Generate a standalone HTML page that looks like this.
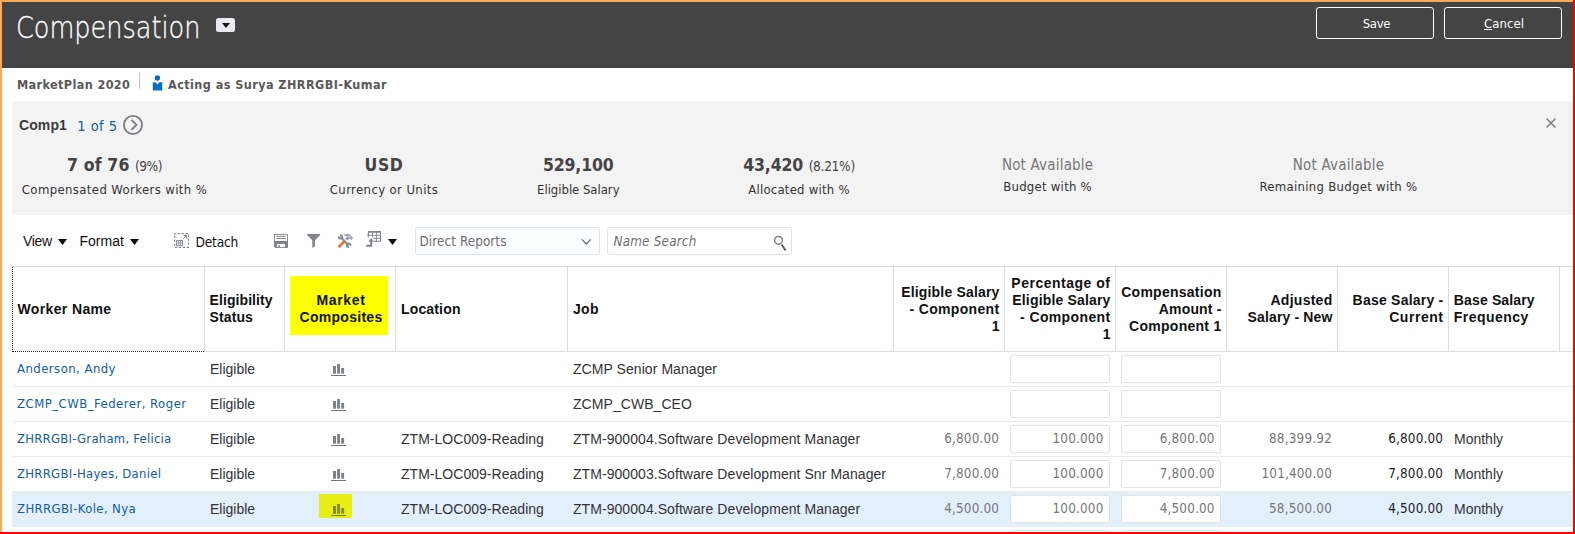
<!DOCTYPE html>
<html><head><meta charset="utf-8"><title>Compensation</title>
<style>
*{box-sizing:border-box;margin:0;padding:0}
html,body{width:1575px;height:534px;overflow:hidden;background:#fff}
body{position:relative;font-family:"Liberation Sans",sans-serif;font-size:14px;color:#333}
.a{position:absolute;white-space:nowrap}
.s{font-family:"DejaVu Sans Condensed","Liberation Sans",sans-serif}
#bt{left:0;top:0;width:1575px;height:2px;background:#fba95b}
#bl{left:0;top:0;width:2px;height:532px;background:#fba95b}
#br{left:1573px;top:0;width:2px;height:534px;background:#fe0000}
#bb{left:0;top:532px;width:1575px;height:2px;background:#fe0000}
#hdr{left:2px;top:2px;width:1571px;height:66px;background:#444444}
#title{left:15.5px;top:10px;font-size:29.5px;line-height:36px;color:#fff;font-family:"DejaVu Sans Light","DejaVu Sans","Liberation Sans",sans-serif;font-weight:normal;transform:scaleX(0.866);-webkit-text-stroke:0.3px #fff;transform-origin:0 0}
#dd{left:216px;top:18px;width:19px;height:14px;background:#e9ebf0;border-radius:2.5px}
#dd:after{content:"";position:absolute;left:5.5px;top:5px;border:4px solid transparent;border-top:5px solid #111;border-bottom:0}
.btn{top:7px;width:118px;height:32px;border:1px solid #fff;border-radius:3px;color:#fff;font-size:13px;line-height:32px;text-align:center;letter-spacing:0.1px}
.sub{font-size:12.5px;line-height:16px;font-weight:bold;color:#595959}
#sep{left:139px;top:73px;width:1px;height:16px;background:#c4c0a8}
#panel{left:12px;top:101px;width:1561px;height:114px;background:#f3f3f3}
.big{font-size:17.5px;font-weight:bold;color:#444;line-height:22px}
.pct{font-size:13.6px;font-weight:normal;color:#444}
.lbl{font-size:13px;color:#333;line-height:18px}
.na{font-size:15px;color:#777;line-height:18px}
.ctr{text-align:center;transform:translateX(-50%)}
.tb{font-size:14px;line-height:16px;color:#111}
.tri{top:239px}
.inp{top:227px;height:28px;width:185px;border:1px solid #dce3ea;border-radius:2.5px;background:#fcfdfe;font-size:13.3px;line-height:28px;color:#6e6e6e}
.vl{top:266px;width:1px;height:85px;background:#d6dfe6}
.th{font-weight:bold;font-size:14px;line-height:17px;color:#111}
.th span{display:block}
.row{left:12px;width:1561px;height:35px}
.hl{left:12px;width:1561px;height:1px;background:#ebebeb}
.c{font-size:14px;line-height:16px;color:#333}
.lnk{color:#125ca2;font-size:13px}
.num{color:#777;font-size:13.4px}
.box{width:100px;height:28px;border:1px solid #dfe4e7;border-radius:2px;background:#fff}
</style></head><body>
<div class="a" id="hdr"></div>
<div class="a" id="title">Compensation</div>
<div class="a" id="dd"></div>
<div class="a s btn" style="left:1316px;letter-spacing:-0.3px;padding-left:3px">Save</div>
<div class="a s btn" style="left:1444px;padding-left:2px"><u>C</u>ancel</div>
<div class="a s sub" style="left:17px;top:77px;letter-spacing:0.395px">MarketPlan 2020</div>
<div class="a" id="sep"></div>
<svg class="a" style="left:152px;top:74.5px" width="11" height="16" viewBox="0 0 11 16"><circle cx="5.4" cy="3" r="2.7" fill="#0a6bc8"/><path d="M0.8 7.2h2.6l2 2.4 2-2.4h2.8v8.3H0.8z" fill="#0a6bc8"/></svg>
<div class="a s sub" style="left:168px;top:77px;letter-spacing:0.443px">Acting as Surya ZHRRGBI-Kumar</div>
<div class="a" id="panel"></div>
<div class="a " style="left:19px;top:117px;font-size:14px;font-weight:bold;color:#3a3a3a;line-height:16px;letter-spacing:0.1px">Comp1</div>
<div class="a s" style="left:77.3px;top:117px;font-size:14.5px;color:#145c9e;line-height:18px;letter-spacing:0.458px">1 of 5</div>
<svg class="a" style="left:122px;top:114px" width="22" height="22" viewBox="0 0 22 22"><circle cx="11" cy="10.9" r="9.05" fill="none" stroke="#7b8085" stroke-width="1.9"/><path d="M9.4 5.9l5 5L9.4 15.9" fill="none" stroke="#7b8085" stroke-width="2"/></svg>
<svg class="a" style="left:1546px;top:118px" width="10" height="10" viewBox="0 0 10 10"><path d="M0.5 0.5l9 9M9.5 0.5l-9 9" stroke="#7d8287" stroke-width="1.5"/></svg>
<div class="a s ctr big" style="left:114.5px;top:154px"><span style="letter-spacing:0.145px">7 of 76</span> <span class="pct" style="letter-spacing:-0.488px">(9%)</span></div>
<div class="a s ctr lbl" style="left:114.5px;top:180.5px;letter-spacing:0.382px">Compensated Workers with %</div>
<div class="a s ctr big" style="left:384px;top:154px"><span style="letter-spacing:0.532px">USD</span></div>
<div class="a s ctr lbl" style="left:384px;top:180.5px;letter-spacing:0.38px">Currency or Units</div>
<div class="a s ctr big" style="left:578.3px;top:154px"><span style="letter-spacing:-0.131px">529,100</span></div>
<div class="a s ctr lbl" style="left:578.3px;top:180.5px;letter-spacing:-0.026px">Eligible Salary</div>
<div class="a s ctr big" style="left:799px;top:154px"><span style="letter-spacing:-0.128px">43,420</span> <span class="pct" style="letter-spacing:-0.313px">(8.21%)</span></div>
<div class="a s ctr lbl" style="left:799px;top:180.5px;letter-spacing:0.237px">Allocated with %</div>
<div class="a s ctr na" style="left:1047.6px;top:156px;letter-spacing:0.191px">Not Available</div>
<div class="a s ctr lbl" style="left:1047.6px;top:177.5px;letter-spacing:0.259px">Budget with %</div>
<div class="a s ctr na" style="left:1338.5px;top:156px;letter-spacing:0.191px">Not Available</div>
<div class="a s ctr lbl" style="left:1338.5px;top:177.5px;letter-spacing:0.296px">Remaining Budget with %</div>
<div class="a tb" style="left:23px;top:232.5px;letter-spacing:-0.35px">View</div>
<svg class="a tri" style="left:58.3px" width="9" height="6" viewBox="0 0 9 6"><path d="M0 0h9L4.5 6z" fill="#0a0a0a"/></svg>
<div class="a tb" style="left:79.5px;top:232.5px;">Format</div>
<svg class="a tri" style="left:130.3px" width="9" height="6" viewBox="0 0 9 6"><path d="M0 0h9L4.5 6z" fill="#0a0a0a"/></svg>
<svg class="a" style="left:174px;top:233px" width="15" height="15" viewBox="0 0 15 15"><rect x="0.6" y="0.6" width="13.8" height="13.8" fill="none" stroke="#8a8f96" stroke-width="1.1" stroke-dasharray="2.6 1.4" stroke-dashoffset="1.3"/><rect x="2.5" y="7.6" width="6" height="5" fill="none" stroke="#8a8f96" stroke-width="1"/><path d="M2.5 10.1h6M4.5 7.6v5M6.5 7.6v5" stroke="#8a8f96" stroke-width="0.8"/><path d="M9.2 5.8L12.4 2.6M9.8 2.5h2.8v2.8" fill="none" stroke="#8a8f96" stroke-width="1"/></svg>
<div class="a s tb" style="left:195.5px;top:234px;font-size:13.6px;color:#111;letter-spacing:-0.203px">Detach</div>
<svg class="a" style="left:274px;top:234px" width="14" height="14" viewBox="0 0 14 14"><path d="M1 0h12a1 1 0 0 1 1 1v12a1 1 0 0 1-1 1H1.6L0 12.6V1A1 1 0 0 1 1 0z" fill="#7f8389"/><rect x="0.9" y="0.9" width="12.2" height="6" fill="#fff"/><path d="M2.2 2.4h9.6M2.2 4.5h9.6" stroke="#7f8389" stroke-width="0.95"/><rect x="3" y="10.1" width="8.1" height="3" fill="#fff"/><rect x="4.1" y="11.2" width="1.7" height="1.8" fill="#7f8389"/></svg>
<svg class="a" style="left:307px;top:234px" width="14" height="14" viewBox="0 0 14 14"><path d="M0 0.1H13.1V1L8 6.2V12.3L5.3 13.9V6.2L0 1z" fill="#82868c"/></svg>
<svg class="a" style="left:337px;top:233px" width="17" height="16" viewBox="0 0 17 16"><path d="M4.6 5l6 6.4" stroke="#8a9099" stroke-width="2.2"/><circle cx="3.5" cy="3.9" r="2.7" fill="#8a9099"/><path d="M3.7 4.1L-0.6 2.4 1.9-0.7z" fill="#fff"/><circle cx="11.6" cy="12.3" r="2.7" fill="#8a9099"/><path d="M11.4 12.1L15.7 13.8 13.2 16.9z" fill="#fff"/><path d="M6.8 1.5L12.3 1 16.2 4.9 14.6 7.1 12.7 5.5 10.2 7.6 8 5.4 10.2 3.5 6.8 2.6z" fill="#98a0ab"/><path d="M10.4 3.4l2-1.2 1.6 1.8-2 1.4z" fill="#c3c9d2"/><path d="M1.6 14.3L7.9 7.7" stroke="#de7b3b" stroke-width="2.7"/></svg>
<svg class="a" style="left:366px;top:231px" width="16" height="17" viewBox="0 0 16 17"><rect x="2.6" y="0.6" width="11.9" height="9.7" fill="#fff" stroke="#82868c" stroke-width="1"/><path d="M2.1 0.9h12.9" stroke="#82868c" stroke-width="1.7"/><path d="M2.6 4.3h12M2.6 7.3h12M6.5 0.6v9.7M10.4 0.6v9.7" stroke="#82868c" stroke-width="0.95"/><rect x="1.5" y="5.6" width="5.8" height="6" fill="#fff"/><path d="M2.1 2v4" stroke="#82868c" stroke-width="1"/><path d="M0.1 14.65h5.05V10" fill="none" stroke="#82868c" stroke-width="2"/><path d="M2.2 10.6L5 7.3l2.8 3.3z" fill="#82868c"/></svg>
<svg class="a tri" style="left:388px" width="9" height="6" viewBox="0 0 9 6"><path d="M0 0h9L4.5 6z" fill="#0a0a0a"/></svg>
<div class="a s inp" style="left:415px;padding-left:3.5px;letter-spacing:0.113px">Direct Reports</div>
<svg class="a" style="left:581px;top:238px" width="11" height="8" viewBox="0 0 11 8"><path d="M0.8 1.4L5.3 6.2 9.8 1.4" fill="none" stroke="#666" stroke-width="1.2"/></svg>
<div class="a s inp" style="left:607px;font-style:italic;padding-left:5.5px;background:#fff;letter-spacing:0.23px">Name Search</div>
<svg class="a" style="left:772px;top:234px" width="16" height="18" viewBox="0 0 16 18"><circle cx="6.5" cy="6.3" r="3.9" fill="none" stroke="#7a7f85" stroke-width="1.5"/><path d="M9.6 10.4l4 6" stroke="#555" stroke-width="1.8"/></svg>
<div class="a" style="left:12px;top:266px;width:1561px;height:1px;background:#d6dfe6"></div>
<div class="a" style="left:204px;top:351px;width:1369px;height:1px;background:#d6dfe6"></div>
<div class="a vl" style="left:204px"></div>
<div class="a vl" style="left:284px"></div>
<div class="a vl" style="left:395px"></div>
<div class="a vl" style="left:567px"></div>
<div class="a vl" style="left:893px"></div>
<div class="a vl" style="left:1004px"></div>
<div class="a vl" style="left:1115px"></div>
<div class="a vl" style="left:1226px"></div>
<div class="a vl" style="left:1337px"></div>
<div class="a vl" style="left:1448px"></div>
<div class="a vl" style="left:1559px"></div>
<div class="a" style="left:12px;top:267px;width:192px;height:85px;border-left:1px dotted #222;border-bottom:1px dotted #222"></div>
<div class="a" style="left:290px;top:276px;width:98px;height:59px;background:#ffff00"></div>
<div class="a th" style="left:17.5px;top:301px;text-align:left"><span style="letter-spacing:0.362px">Worker Name</span></div>
<div class="a th" style="left:209.5px;top:292px;text-align:left"><span style="letter-spacing:0.088px">Eligibility</span><span style="letter-spacing:0.117px">Status</span></div>
<div class="a th ctr" style="left:341px;top:292px"><span style="letter-spacing:0.677px">Market</span><span style="letter-spacing:0.287px">Composites</span></div>
<div class="a th" style="left:401px;top:301px;text-align:left"><span style="letter-spacing:0.157px">Location</span></div>
<div class="a th" style="left:573px;top:301px;text-align:left"><span style="letter-spacing:0.336px">Job</span></div>
<div class="a th" style="right:575.5px;top:284px;text-align:right"><span style="letter-spacing:0.172px">Eligible Salary</span><span style="letter-spacing:0.334px">- Component</span><span style="letter-spacing:0px">1</span></div>
<div class="a th" style="right:464.5px;top:274.7px;text-align:right"><span style="letter-spacing:0.508px">Percentage of</span><span style="letter-spacing:0.165px">Eligible Salary</span><span style="letter-spacing:0.37px">- Component</span><span style="letter-spacing:0px">1</span></div>
<div class="a th" style="right:353.5px;top:284px;text-align:right"><span style="letter-spacing:0.255px">Compensation</span><span style="letter-spacing:0.158px">Amount -</span><span style="letter-spacing:0.268px">Component 1</span></div>
<div class="a th" style="right:242.5px;top:292px;text-align:right"><span style="letter-spacing:0.264px">Adjusted</span><span style="letter-spacing:0.136px">Salary - New</span></div>
<div class="a th" style="right:131.5px;top:292px;text-align:right"><span style="letter-spacing:0.227px">Base Salary -</span><span style="letter-spacing:0.534px">Current</span></div>
<div class="a th" style="left:1453.8px;top:292px;text-align:left"><span style="letter-spacing:0.145px">Base Salary</span><span style="letter-spacing:0.465px">Frequency</span></div>
<div class="a hl" style="top:386px"></div>
<div class="a s c lnk" style="left:17px;top:360.7px;letter-spacing:0.45px">Anderson, Andy</div>
<div class="a c" style="left:210px;top:360.7px;">Eligible</div>
<svg class="a" style="left:331px;top:363px" width="15" height="13" viewBox="0 0 15 13"><rect x="0" y="12" width="15" height="1" fill="#73777d"/><rect x="2" y="3" width="3" height="7.7" fill="#7d8289"/><rect x="6.1" y="1" width="2.9" height="9.7" fill="#7d8289"/><rect x="10.2" y="5" width="2.9" height="5.7" fill="#7d8289"/></svg>
<div class="a c" style="left:573px;top:360.7px;letter-spacing:0.06px">ZCMP Senior Manager</div>
<div class="a box" style="left:1010px;top:355px"></div>
<div class="a box" style="left:1121px;top:355px"></div>
<div class="a hl" style="top:421px"></div>
<div class="a s c lnk" style="left:17px;top:395.7px;letter-spacing:0.474px">ZCMP_CWB_Federer, Roger</div>
<div class="a c" style="left:210px;top:395.7px;">Eligible</div>
<svg class="a" style="left:331px;top:398px" width="15" height="13" viewBox="0 0 15 13"><rect x="0" y="12" width="15" height="1" fill="#73777d"/><rect x="2" y="3" width="3" height="7.7" fill="#7d8289"/><rect x="6.1" y="1" width="2.9" height="9.7" fill="#7d8289"/><rect x="10.2" y="5" width="2.9" height="5.7" fill="#7d8289"/></svg>
<div class="a c" style="left:573px;top:395.7px;letter-spacing:0.06px">ZCMP_CWB_CEO</div>
<div class="a box" style="left:1010px;top:390px"></div>
<div class="a box" style="left:1121px;top:390px"></div>
<div class="a hl" style="top:456px"></div>
<div class="a s c lnk" style="left:17px;top:430.7px;letter-spacing:0.222px">ZHRRGBI-Graham, Felicia</div>
<div class="a c" style="left:210px;top:430.7px;">Eligible</div>
<svg class="a" style="left:331px;top:433px" width="15" height="13" viewBox="0 0 15 13"><rect x="0" y="12" width="15" height="1" fill="#73777d"/><rect x="2" y="3" width="3" height="7.7" fill="#7d8289"/><rect x="6.1" y="1" width="2.9" height="9.7" fill="#7d8289"/><rect x="10.2" y="5" width="2.9" height="5.7" fill="#7d8289"/></svg>
<div class="a c" style="left:401px;top:430.7px;letter-spacing:0.03px">ZTM-LOC009-Reading</div>
<div class="a c" style="left:573px;top:430.7px;letter-spacing:0.06px">ZTM-900004.Software Development Manager</div>
<div class="a s c num" style="right:576px;top:430.7px;letter-spacing:0.132px">6,800.00</div>
<div class="a box" style="left:1010px;top:425px"></div>
<div class="a box" style="left:1121px;top:425px"></div>
<div class="a s c num" style="right:471.5px;top:430.7px;letter-spacing:0.17px">100.000</div>
<div class="a s c num" style="right:360.5px;top:430.7px;letter-spacing:0.132px">6,800.00</div>
<div class="a s c num" style="right:243px;top:430.7px;letter-spacing:0.189px">88,399.92</div>
<div class="a s c num" style="right:132px;top:430.7px;color:#222;letter-spacing:0.132px">6,800.00</div>
<div class="a c" style="left:1454px;top:430.7px;">Monthly</div>
<div class="a hl" style="top:491px"></div>
<div class="a s c lnk" style="left:17px;top:465.7px;letter-spacing:0.262px">ZHRRGBI-Hayes, Daniel</div>
<div class="a c" style="left:210px;top:465.7px;">Eligible</div>
<svg class="a" style="left:331px;top:468px" width="15" height="13" viewBox="0 0 15 13"><rect x="0" y="12" width="15" height="1" fill="#73777d"/><rect x="2" y="3" width="3" height="7.7" fill="#7d8289"/><rect x="6.1" y="1" width="2.9" height="9.7" fill="#7d8289"/><rect x="10.2" y="5" width="2.9" height="5.7" fill="#7d8289"/></svg>
<div class="a c" style="left:401px;top:465.7px;letter-spacing:0.03px">ZTM-LOC009-Reading</div>
<div class="a c" style="left:573px;top:465.7px;letter-spacing:0.06px">ZTM-900003.Software Development Snr Manager</div>
<div class="a s c num" style="right:576px;top:465.7px;letter-spacing:0.132px">7,800.00</div>
<div class="a box" style="left:1010px;top:460px"></div>
<div class="a box" style="left:1121px;top:460px"></div>
<div class="a s c num" style="right:471.5px;top:465.7px;letter-spacing:0.17px">100.000</div>
<div class="a s c num" style="right:360.5px;top:465.7px;letter-spacing:0.132px">7,800.00</div>
<div class="a s c num" style="right:243px;top:465.7px;letter-spacing:0.153px">101,400.00</div>
<div class="a s c num" style="right:132px;top:465.7px;color:#222;letter-spacing:0.132px">7,800.00</div>
<div class="a c" style="left:1454px;top:465.7px;">Monthly</div>
<div class="a row" style="top:492px;background:#e3f0fc;height:35px"></div>
<div class="a" style="left:319px;top:494px;width:33px;height:24px;background:#e6ee16"></div>
<div class="a s c lnk" style="left:17px;top:500.7px;letter-spacing:0.37px">ZHRRGBI-Kole, Nya</div>
<div class="a c" style="left:210px;top:500.7px;">Eligible</div>
<svg class="a" style="left:331px;top:503px" width="15" height="13" viewBox="0 0 15 13"><rect x="0" y="12" width="15" height="1" fill="#7a7e2a"/><rect x="2" y="3" width="3" height="7.7" fill="#85892f"/><rect x="6.1" y="1" width="2.9" height="9.7" fill="#85892f"/><rect x="10.2" y="5" width="2.9" height="5.7" fill="#85892f"/></svg>
<div class="a c" style="left:401px;top:500.7px;letter-spacing:0.03px">ZTM-LOC009-Reading</div>
<div class="a c" style="left:573px;top:500.7px;letter-spacing:0.06px">ZTM-900004.Software Development Manager</div>
<div class="a s c num" style="right:576px;top:500.7px;letter-spacing:0.132px">4,500.00</div>
<div class="a box" style="left:1010px;top:495px"></div>
<div class="a box" style="left:1121px;top:495px"></div>
<div class="a s c num" style="right:471.5px;top:500.7px;letter-spacing:0.17px">100.000</div>
<div class="a s c num" style="right:360.5px;top:500.7px;letter-spacing:0.132px">4,500.00</div>
<div class="a s c num" style="right:243px;top:500.7px;letter-spacing:0.189px">58,500.00</div>
<div class="a s c num" style="right:132px;top:500.7px;color:#222;letter-spacing:0.132px">4,500.00</div>
<div class="a c" style="left:1454px;top:500.7px;">Monthly</div>
<div class="a" style="left:12px;top:527px;width:1560px;height:5px;background:#fff"></div>
<div class="a box" style="left:1010px;top:530px"></div><div class="a box" style="left:1121px;top:530px"></div>
<div class="a" id="bt"></div><div class="a" id="bl"></div><div class="a" id="br"></div><div class="a" id="bb"></div>
</body></html>
